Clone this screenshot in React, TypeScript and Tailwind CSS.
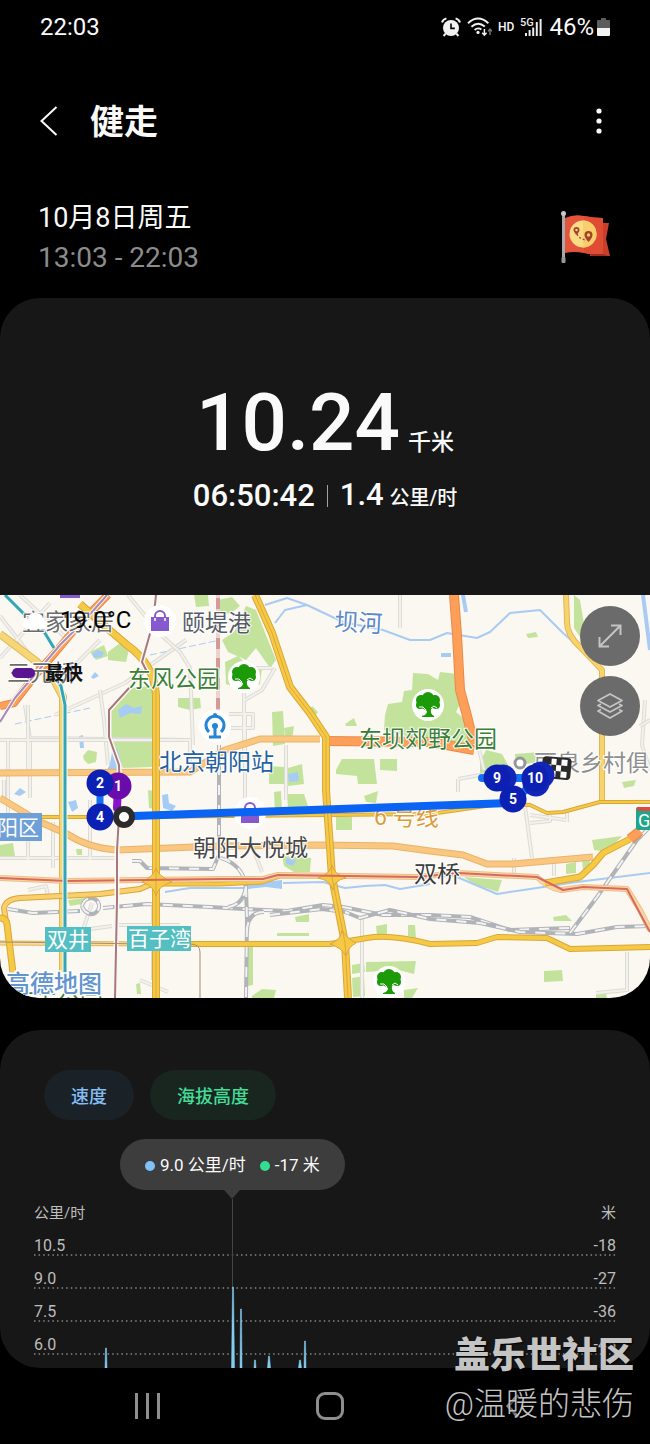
import { ReactNode } from "react";

const CARD = "bg-[#171717]";

const GREENS = [
  "110,710 130,688 152,686 152,767 123,768 110,738",
  "108,652 124,640 130,645 126,662 108,660",
  "90,652 104,645 108,656 96,660",
  "83,756 88,750 97,752 96,762 88,764 84,760",
  "178,698 200,698 201,708 190,710 178,707",
  "194,595 208,595 209,606 196,607",
  "222,640 234,632 246,606 256,610 268,640 276,660 270,668 256,648 246,660 228,652",
  "218,600 232,597 240,606 230,614 220,612",
  "225,662 238,656 246,664 262,668 260,684 246,690 226,684",
  "272,712 283,711 285,744 273,746",
  "284,728 294,726 292,740 286,742",
  "312,706 318,712 314,718 309,712",
  "345,724 354,718 357,726 346,726",
  "385,715 388,704 402,702 404,691 412,690 413,673 428,674 438,680 440,672 458,674 462,700 456,712 468,722 470,742 452,748 384,730",
  "269,766 285,767 285,784 269,784",
  "288,768 302,764 304,784 288,786",
  "336,770 342,759 374,759 377,784 358,784 357,776 336,774",
  "380,759 397,759 397,771 380,770",
  "274,792 281,791 282,812 275,812",
  "287,794 304,794 308,806 288,808",
  "336,816 352,817 352,830 336,830",
  "364,796 378,791 376,803 366,802",
  "480,762 486,750 502,754 512,772 490,776 480,774",
  "515,754 540,752 536,762 516,766",
  "574,595 580,600 584,624 582,640 574,628",
  "526,634 536,632 538,637 528,638",
  "622,782 636,780 634,786 624,788",
  "282,856 311,858 310,872 294,872 284,866",
  "0,845 13,843 15,856 6,859 0,858",
  "76,849 82,849 82,855 77,855",
  "592,840 622,836 608,852 594,850",
  "464,877 502,880 498,892 486,888 478,887",
  "566,864 576,862 576,873 566,874",
  "582,860 590,858 590,870 583,870",
  "553,917 566,915 572,921 554,921",
  "544,971 562,970 563,981 544,982",
  "277,933 309,933 309,936 277,936",
  "295,917 309,914 309,922 296,922",
  "352,965 364,963 365,972 352,974",
  "366,962 416,961 414,974 398,970 366,972",
  "352,978 364,976 365,996 353,997",
  "404,990 418,988 412,998 404,998",
  "376,926 387,924 387,936 377,936",
  "408,925 415,925 416,938 408,936",
  "248,948 253,944 253,985 248,986",
  "252,996 262,989 276,990 274,998 252,998",
  "136,984 140,983 141,994 137,994",
  "148,790 160,792 160,810 149,808",
  "68,900 84,898 82,904 70,906",
  "596,995 606,993 607,998 596,998",
];

const WATERS = [
  "118,710 126,704 134,708 142,706 141,714 130,713 120,718",
  "112,752 117,748 122,766 118,776 104,776 110,764",
  "92,654 97,650 104,652 102,657 94,658",
  "91,677 95,672 99,676 93,679",
  "79,736 83,735 84,748 80,748",
  "14,794 20,788 26,792 20,796",
  "244,886 262,882 282,880 282,889 266,887 248,889",
  "162,795 168,794 169,803 176,806 172,811 163,808",
  "288,774 298,772 299,781 289,782",
  "286,858 296,860 293,866 286,864",
  "441,653 451,653 451,657 441,657",
  "68,802 76,800 78,808 72,812",
];

const STREETS = [
  "M0 616L40 668M0 658L50 603M20 595L68 640M60 680L100 640M25 705L30 738L190 740",
  "M28 705L28 770M8 740V815M30 742V798M0 740H96M55 715L125 683L186 640",
  "M128 595L160 634L180 652L190 668L193 745M100 690L104 720L108 765M4 780V800",
  "M0 858H118M28 820V860M53 822V868M90 800V860M28 890L46 886L48 896",
  "M244 760V668L272 668M245 700L262 690L275 668M229 714H253V728H228M245 714V800",
  "M286 745L286 800M362 918V998M508 770L458 779M458 779V792M478 745L484 770",
  "M525 806L532 858M530 823L550 821V815M567 822V812M530 815L566 820",
  "M554 862V876M514 858V874M627 952V990L596 993M645 700L642 745L650 770",
  "M92 903L83 930L112 926M153 905V980M180 925H114M140 980L168 992M250 840L262 872",
  "M38 740H190V770M400 595V628M640 726L650 720",
];

const AMBER = "#f6c945";
const AMBER_EDGE = "#d9a63a";
const PEACH = "#fac781";
const PEACH_EDGE = "#e8b36a";
const ORANGE = "#fd9f59";
const ORANGE_EDGE = "#e88a49";

const ROADS = [
  { d: "M0 817H130L430 814L500 804L530 805L547 813L563 812L600 802H650", w: 3, fill: AMBER, edge: AMBER_EDGE },
  { d: "M0 773L190 772L225 750L260 739H320", w: 6, fill: PEACH, edge: PEACH_EDGE },
  { d: "M0 798L40 822L67 834Q88 848 117 850L220 846L317 845L393 846L430 851L463 855L487 864H513L593 857", w: 6, fill: PEACH, edge: PEACH_EDGE },
  { d: "M0 634L37 662L55 682L63 697V972", w: 7, fill: "#f6d778", edge: "#e3b653" },
  { d: "M602 800V670L580 647Q566 634 567 620L566 595", w: 5, fill: "#f7d36c", edge: "#e3b653" },
  { d: "M325 741L430 742L474 750", w: 9, fill: ORANGE, edge: ORANGE_EDGE },
  { d: "M454 595L457 635L460 690L466 712L474 744", w: 9, fill: ORANGE, edge: ORANGE_EDGE },
  { d: "M0 706L14 703L37 673L55 653L80 623L108 595", w: 7, fill: ORANGE, edge: ORANGE_EDGE },
  { d: "M0 943L150 944", w: 4, fill: "#f8dba0", edge: "#e3b653" },
  { d: "M150 944H330L367 938Q390 934 430 944L477 943L497 937L547 938L570 949L650 947", w: 5, fill: AMBER, edge: AMBER_EDGE },
  { d: "M6 922L4 908Q6 899 20 898L100 894L140 889L156 882", w: 5, fill: "#fad06f", edge: AMBER_EDGE },
  { d: "M0 918Q6 918 7 924L13 973", w: 6, fill: AMBER, edge: AMBER_EDGE },
  { d: "M150 884H220L262 882L280 876H332", w: 4, fill: AMBER, edge: AMBER_EDGE },
  { d: "M0 878L67 881L220 879L263 879L278 875L417 877L458 873L537 877Q548 888 561 890L583 887L627 889L640 910L650 930", w: 5, fill: "#fad7a2", edge: "#eac08a" },
  { d: "M545 883L580 877L593 865L603 853L630 839", w: 6, fill: AMBER, edge: AMBER_EDGE },
  { d: "M630 839L640 831", w: 9, fill: ORANGE, edge: ORANGE_EDGE },
  { d: "M80 604L100 622L127 645Q154 664 156 695V998", w: 7, fill: AMBER, edge: AMBER_EDGE },
  { d: "M255 595L272 633L290 687L310 713L326 737L326 790L332 877L345 943L348 998", w: 7, fill: AMBER, edge: AMBER_EDGE },
];

const RAILS = [
  "M8 909L33 913L80 911M103 908L147 904L210 907L243 909L287 911L323 905L343 907L383 915L430 915L470 917L510 930L570 928",
  "M340 910L360 918L390 910L430 919L480 923L520 932L577 934L617 927L650 926",
  "M270 915L322 909L345 912",
  "M570 933L597 897L637 840L650 827",
  "M246 887L247 920L246 998M228 907Q246 904 246 882M264 912Q247 912 247 932",
  "M219 745V850M132 861H140L147 868L213 869L218 857L226 860Q244 868 246 887",
  "M82 906Q84 898 92 898Q100 900 99 908Q96 915 90 914Q84 912 82 906",
];

const LABELS = [
  { x: 22, y: 630, text: "宜家家居", fill: "#6c6c6c" },
  { x: 7, y: 681, text: "三元桥", fill: "#6c6c6c" },
  { x: 182, y: 631, text: "颐堤港", fill: "#555b66" },
  { x: 128, y: 687, text: "东风公园", fill: "#3b7f35" },
  { x: 359, y: 747, text: "东坝郊野公园", fill: "#3b7f35" },
  { x: 159, y: 770, text: "北京朝阳站", fill: "#23619f" },
  { x: 193, y: 856, text: "朝阳大悦城", fill: "#484848" },
  { x: 414, y: 882, text: "双桥", fill: "#3c3c3c" },
  { x: 534, y: 771, text: "丽泉乡村俱乐部", fill: "#8f8f8f" },
  { x: 11, y: 1009, text: "庆丰公园", fill: "#3b7f35" },
];

const PINS = [
  { x: 503, y: 778, label: "", fill: "#1226b8" },
  { x: 541, y: 775, label: "", fill: "#1226b8" },
  { x: 536, y: 783, label: "", fill: "#1226b8" },
  { x: 118, y: 786, label: "1", fill: "#6a0bab" },
  { x: 100, y: 783, label: "2", fill: "#0d20b4" },
  { x: 100, y: 817, label: "4", fill: "#0d20b4" },
  { x: 497, y: 778, label: "9", fill: "#0d20b4" },
  { x: 535, y: 778, label: "10", fill: "#0d20b4" },
  { x: 513, y: 799, label: "5", fill: "#0d20b4" },
];

const ROWS = [
  { speed: "10.5", altitude: "-18" },
  { speed: "9.0", altitude: "-27" },
  { speed: "7.5", altitude: "-36" },
  { speed: "6.0", altitude: "-45" },
];

const SPIKES = [
  { x: 72, top: 158, w: 2 },
  { x: 199, top: 97, w: 3 },
  { x: 207, top: 119, w: 2 },
  { x: 221, top: 170, w: 2 },
  { x: 235, top: 166, w: 3 },
  { x: 266, top: 170, w: 3 },
  { x: 271, top: 151, w: 2 },
];

function StatusIcons() {
  return (
    <div className="flex items-center gap-1.5">
      <svg width="20" height="20" viewBox="0 0 20 20" fill="none" stroke="#f2f2f2">
        <circle cx="10" cy="11" r="8" fill="#f2f2f2" stroke="none" />
        <path d="M1 5.5Q2 2.4 5.4 1.4M19 5.5Q18 2.4 14.6 1.4M4.6 16.6L2.6 19M15.4 16.6L17.4 19" strokeWidth="2" />
        <path d="M10 6.4V11.4H13.8" stroke="#000" strokeWidth="1.6" />
      </svg>
      <svg width="25" height="20" viewBox="0 0 25 20" fill="none" stroke="#f2f2f2" strokeWidth="1.9">
        <path d="M1 6.2Q11 -3 21.4 6.2M4.4 9.8Q11 4 17.8 9.6M7.6 13Q11 10 14.4 12.6" />
        <circle cx="11" cy="15.4" r="1.6" fill="#f2f2f2" stroke="none" />
        <path d="M17.4 12V18M15.2 15.8L17.4 18.2L19.6 15.8" strokeWidth="1.5" />
        <path d="M23 18V12M21 14.4L23 12L25 14.4" stroke="#777" strokeWidth="1.4" />
      </svg>
      <span className="text-[12px] leading-5 font-medium">HD</span>
      <svg width="23" height="20" viewBox="0 0 23 20" fill="#ececec">
        <text x="0" y="9" fontSize="11" fontWeight="500">5G</text>
        <path d="M5 16h2v3H5zM8.600 13h2v6h-2zM12.200 10.500h2V19h-2zM15.800 5h2v14h-2zM19.600 2h2v17h-2z" />
      </svg>
    </div>
  );
}

function FlagBadge() {
  return (
    <svg width="52" height="56" viewBox="0 0 52 56">
      <path d="M38 13H49L46 29L50 46H30z" fill="#c9402a" />
      <path d="M5 8Q14 4 24 6Q34 8 43 8V44Q34 45 24 43Q14 41 5 43z" fill="#e4543a" />
      <path d="M24 6Q34 8 43 8V44Q34 45 24 43z" fill="#dd4c33" />
      <path d="M43 44L30 44L32 46H48z" fill="#9f2c1f" />
      <circle cx="23" cy="24" r="13.500" fill="#fbdc86" />
      <path d="M23 10.500A13.500 13.500 0 0 1 23 37.500z" fill="#f8cf6c" />
      <path d="M17 24Q19 29 26 30" fill="none" stroke="#a84a2c" strokeWidth="1.300" strokeDasharray="2 2" />
      <path d="M16.500 25Q13.500 21.500 13.500 20A3 3 0 0 1 19.500 20Q19.500 21.500 16.500 25z" fill="#a5402a" />
      <path d="M28.500 32Q24.500 27.500 24.500 25A4 4 0 0 1 32.500 25Q32.500 27.500 28.500 32z" fill="#a5402a" />
      <circle cx="16.500" cy="20" r="1.200" fill="#fbdc86" />
      <circle cx="28.500" cy="25" r="1.700" fill="#f8cf6c" />
      <rect x="2" y="3" width="3" height="49" fill="#a9a9ad" />
      <circle cx="3.500" cy="3.500" r="2.500" fill="#c9c9cd" />
      <rect x="1.500" y="47" width="4" height="6" rx="1" fill="#97979b" />
    </svg>
  );
}

function MapIcon({ x, y, children }: { x: number; y: number; children: ReactNode }) {
  return (
    <g transform={`translate(${x} ${y})`}>
      <circle r="16" fill="#fff" />
      {children}
    </g>
  );
}

function Tree({ x, y }: { x: number; y: number }) {
  return (
    <MapIcon x={x} y={y}>
      <g fill="#1c9a08">
        <circle cx="-7" cy="-5" r="5" />
        <circle cx="0" cy="-7" r="6" />
        <circle cx="7" cy="-5" r="5" />
        <circle cx="-8" cy="0" r="4" />
        <circle cx="8" cy="0" r="4" />
        <path d="M-8 -5H8V1L3 4Q2 9 6 11V12H-6V11Q-1 10 -1 6L-6 3z" />
      </g>
      <path d="M-9 2H-5L-2 5M9 3L6 1L3 3" fill="none" stroke="#fff" strokeWidth="1" />
    </MapIcon>
  );
}

function Bag({ x, y }: { x: number; y: number }) {
  return (
    <MapIcon x={x} y={y}>
      <path d="M-9 -4H9V10H-9z" fill="#8759cf" />
      <path d="M-5 0V-5A5 5 0 0 1 5 -5V0" fill="none" stroke="#8759cf" strokeWidth="2" />
      <path d="M-5 -3V0M5 -3V0" stroke="#fff" strokeWidth="1.500" />
    </MapIcon>
  );
}

function RouteMap() {
  return (
    <svg
      className="block h-[403px] w-full"
      viewBox="0 595 650 403"
      preserveAspectRatio="xMidYMid slice"
      role="img"
      aria-label="路线"
    >
      <rect y="595" width="650" height="403" fill="#fbf8f1" />
      {GREENS.map((points) => (
        <polygon key={points} points={points} fill="#c3e39d" />
      ))}
      {WATERS.map((points) => (
        <polygon key={points} points={points} fill="#a6cbf5" />
      ))}
      <g fill="none" strokeLinejoin="round">
        <g stroke="#a9cbf3" strokeWidth="2">
          <path d="M265 605L287 598L307 605L343 622L383 630L410 640L430 640L447 633L477 638L490 632L510 613L540 610L563 633L597 663" />
          <path d="M283 883L323 882L345 888L365 886L385 885L400 889L430 884M457 877L497 894L530 889L577 882L650 873" />
          <path d="M165 892L190 888L250 888M275 623L285 610L307 605" />
          <path d="M463 595L466 612M643 595L650 650" strokeWidth="4" />
          <path d="M15 724L90 708M150 655L220 640" strokeWidth="1" strokeDasharray="7 3" />
        </g>
        {STREETS.map((d) => (
          <g key={d}>
            <path d={d} stroke="#dddbd6" strokeWidth="4" />
            <path d={d} stroke="#f3f1ec" strokeWidth="2" />
          </g>
        ))}
        {RAILS.map((d) => (
          <g key={d}>
            <path d={d} stroke="#b0b3b8" strokeWidth="4" />
            <path d={d} stroke="#f3f3f3" strokeWidth="2" strokeDasharray="10 10" />
          </g>
        ))}
        <path d="M218 595V712" stroke="#ecd3d0" strokeWidth="4" />
        <path d="M218 598V712" stroke="#d39a98" strokeWidth="4" strokeDasharray="11 9" />
        {ROADS.map((road) => (
          <g key={road.d}>
            <path d={road.d} stroke={road.edge} strokeWidth={road.w + 1} />
            <path d={road.d} stroke={road.fill} strokeWidth={road.w - 1} />
          </g>
        ))}
        <path d="M332 865Q334 874 346 878Q334 880 333 890Q330 880 318 878Q330 874 332 865z" fill={AMBER} stroke={AMBER_EDGE} />
        <path d="M156 868Q158 876 172 882Q158 886 156 896Q154 886 142 882Q154 876 156 868z" fill={AMBER} stroke={AMBER_EDGE} />
        <path d="M342 930Q346 938 356 943Q348 947 346 956Q342 948 330 944Q341 940 342 930z" fill={AMBER} stroke={AMBER_EDGE} />
        <path d="M156 685V998M255 595L272 633L290 687L310 713L326 737L326 790L332 877L345 943L348 998" stroke="#dba93c" />
        <path d="M0 878L67 881L220 879L263 879L278 875L417 877L458 873L537 877L563 890L583 887L627 889L650 932" stroke="#d9685f" strokeWidth="2" />
        <path d="M156 595L153 623L142 662L146 670L130 687L109 710V737L119 765L120 800L117 850V900L115 998" stroke="#fbf8f1" strokeWidth="5" />
        <path d="M156 595L153 623L142 662L146 670L130 687L109 710V737L119 765L120 800L117 850V900L115 998" stroke="#a77780" strokeWidth="2" />
        <path d="M0 942L150 944H190Q200 944 200 952V998" stroke="#a58f72" />
        <path d="M0 722L15 698L60 645L85 620L107 595" stroke="#fbf8f1" strokeWidth="4" />
        <path d="M0 722L15 698L60 645L85 620L107 595" stroke="#a98bb5" strokeWidth="2" />
        <path d="M5 595L23 613L43 630L54 648M50 672L61 686L65 705V975" stroke="#eefafa" strokeWidth="5" />
        <path d="M5 595L23 613L43 630L54 648M50 672L61 686L65 705V975" stroke="#35a5b3" strokeWidth="3" />
      </g>

      <path d="M60 595H80V598H60z" fill="#8759cf" />
      <Bag x={160} y={621} />
      <Bag x={250} y={813} />
      <Tree x={244} y={677} />
      <Tree x={428} y={705} />
      <Tree x={389} y={982} />
      <MapIcon x={215} y={726}>
        <g fill="none" stroke="#2584d4" strokeWidth="3">
          <path d="M-6 6A9 9 0 1 1 6 6" />
          <path d="M-6 11H6M0 0V10" />
        </g>
        <circle r="3" fill="#2584d4" />
        <circle cy="-11" r="2" fill="#2584d4" />
      </MapIcon>
      <circle cx="520" cy="763" r="5" fill="#fff" stroke="#92979c" strokeWidth="3" />

      <g fontSize="23" stroke="#fff" strokeWidth="2" strokeLinejoin="round" paintOrder="stroke">
        {LABELS.map((label) => (
          <text key={label.text} x={label.x} y={label.y} fill={label.fill}>
            {label.text}
          </text>
        ))}
        <text x="334" y="630" fill="#5c8ac6" fontSize="24" transform="rotate(3 334 630)">坝河</text>
        <text x="374" y="825" fill="#dd9a3b">6 号线</text>
      </g>
      <rect y="813" width="42" height="28" fill="#6d9fd8" />
      <rect x="45" y="927" width="46" height="25" fill="#54bfc2" />
      <rect x="127" y="926" width="64" height="25" fill="#54bfc2" />
      <g fill="#fff" fontSize="21">
        <text x="-3" y="835">阳区</text>
        <text x="47" y="947">双井</text>
        <text x="128" y="946">百子湾</text>
      </g>
      <text x="6" y="992" fontSize="24" fontWeight="500" fill="#6295cd" stroke="#fff" strokeWidth="3" paintOrder="stroke">
        高德地图
      </text>
      <rect x="636" y="807" width="20" height="23" rx="2" fill="#1ea58a" />
      <rect x="637" y="807" width="20" height="4" fill="#dd4a40" />
      <text x="638" y="827" fontSize="18" fill="#fff">G</text>

      <g fill="none" strokeLinecap="round">
        <path d="M482 778H540" stroke="#1571f2" strokeWidth="8" />
        <path d="M513 799L536 783" stroke="#1571f2" strokeWidth="8" />
        <path d="M100 783V817" stroke="#1571f2" strokeWidth="7" />
        <path d="M118 786L117 808" stroke="#8a12c9" strokeWidth="8" />
        <path d="M134 816L513 803" stroke="#0a63f2" strokeWidth="8" />
      </g>
      <g transform="rotate(5 556 768)">
        <rect x="542" y="757" width="29" height="22" rx="4" fill="#2a2a2a" />
        <path d="M551 759h5v6h-5zM561 759h6v6h-6zM546 765h5v6h-5zM556 765h5v6h-5zM551 771h5v6h-5zM561 771h6v6h-6z" fill="#fff" />
      </g>
      {PINS.map((pin) => (
        <g key={`${pin.x}-${pin.y}`}>
          <circle cx={pin.x} cy={pin.y} r="13.500" fill={pin.fill} />
          <text x={pin.x} y={pin.y + 5} fontSize="14" fontWeight="700" fill="#fff" textAnchor="middle">
            {pin.label}
          </text>
        </g>
      ))}
      <circle cx="124" cy="817" r="8" fill="#fff" stroke="#2c2c2c" strokeWidth="6" />

      <path d="M29 629Q23 629 23 624Q23 620 28 619Q30 611 37 613Q43 614 43 619Q48 620 47 625Q46 629 42 629z" fill="#fff" />
      <text x="60" y="628" fontSize="24" fill="#000">19.0°C</text>
      <rect x="12" y="668" width="23" height="10" rx="5" fill="#5a1690" />
      <text x="45" y="680" fontSize="19" fontWeight="700" fill="#111">最快</text>
    </svg>
  );
}

function SummaryCard() {
  return (
    <section className={`${CARD} overflow-hidden rounded-[40px]`}>
      <div className="flex flex-col items-center gap-3 pt-[84px] pb-[79px] font-medium">
        <div className="flex items-baseline gap-2 text-[80px] leading-[82px]">
          10.24
          <span className="text-[23px] leading-6">千米</span>
        </div>
        <div className="flex h-10 items-center gap-3 text-[31px] leading-10">
          06:50:42
          <span className="h-[22px] w-px bg-neutral-400" />
          <span>
            1.4 <span className="-ml-0.5 text-[20px]">公里/时</span>
          </span>
        </div>
      </div>
      <div className="relative">
        <RouteMap />
        <div className="absolute top-[11px] right-[10px] flex flex-col gap-[10px]">
          <button aria-label="展开" className="flex size-[60px] items-center justify-center rounded-full bg-[#6b6b6b]">
            <svg width="26" height="26" viewBox="0 0 26 26" fill="none" stroke="#c4c4c4" strokeWidth="2">
              <path d="M2.500 23.500L23.500 2.500M14 2.500H23.500V12M2.500 14V23.500H12" />
            </svg>
          </button>
          <button aria-label="图层" className="flex size-[60px] items-center justify-center rounded-full bg-[#6b6b6b]">
            <svg width="28" height="28" viewBox="0 0 28 28" fill="none" stroke="#c4c4c4" strokeWidth="1.800" strokeLinejoin="round">
              <path d="M14 2L26 8.500L14 15L2 8.500z" />
              <path d="M5 12L2 13.500L14 20L26 13.500L23 12M5 17.500L2 19L14 26L26 19L23 17.500" />
            </svg>
          </button>
        </div>
      </div>
    </section>
  );
}

function ChartCard() {
  return (
    <section className={`${CARD} mt-8 overflow-hidden rounded-[40px] px-[34px] pt-10`}>
      <div className="ml-2.5 flex gap-4 text-[18px] font-medium">
        <button className="h-[50px] rounded-full bg-[#1a2127] px-[27px] pt-0.5 text-[#84bdf3]">速度</button>
        <button className="h-[50px] rounded-full bg-[#19261f] px-[27px] pt-0.5 text-[#43dc98]">海拔高度</button>
      </div>
      <div className="relative mt-[19px] ml-[86px] flex h-[51px] w-fit items-center gap-3.5 rounded-full bg-[#3d3d3d] px-[25px] pt-0.5 text-[17px]">
        <span className="flex items-center gap-[5px]">
          <span className="size-2.5 rounded-full bg-[#7fc1f8]" />
          9.0 公里/时
        </span>
        <span className="flex items-center gap-[5px]">
          <span className="size-2.5 rounded-full bg-[#35dd92]" />
          -17 米
        </span>
        <svg className="absolute top-full left-1/2 -translate-x-1/2" width="16" height="9" viewBox="0 0 16 9">
          <path d="M0 0H16L8 9z" fill="#3d3d3d" />
        </svg>
      </div>
      <div className="relative pt-[13px] pb-[13px] text-[16px] leading-5 text-[#bdbdbd]">
        <div className="flex justify-between text-[15px]">
          <span>公里/时</span>
          <span>米</span>
        </div>
        {ROWS.map((row) => (
          <div key={row.speed} className="relative flex h-[33px] items-end justify-between">
            <span>{row.speed}</span>
            <span>{row.altitude}</span>
            <svg className="absolute bottom-0 left-0 h-0.5 w-full">
              <line x1="0" x2="100%" y1="1" y2="1" stroke="#858585" strokeWidth="1.500" strokeDasharray="1.500 3.100" />
            </svg>
          </div>
        ))}
        <svg className="absolute inset-0 h-full w-full" viewBox="0 0 582 178" preserveAspectRatio="none">
          <path d="M198.500 9V97" stroke="#454545" />
          {SPIKES.map((s) => (
            <path key={s.x} d={`M${s.x - s.w / 2} 178L${s.x - 0.5} ${s.top}H${s.x + 0.5}L${s.x + s.w / 2} 178z`} fill="#84cdf0" stroke="#84cdf0" strokeWidth="0.500" />
          ))}
        </svg>
      </div>
    </section>
  );
}

export default function App() {
  return (
    <main className="relative min-h-screen overflow-hidden bg-black font-['Roboto','Noto_Sans_CJK_SC',sans-serif] text-[#fafafa]">
      <div className="flex h-[54px] items-center justify-between pr-10 pl-10 text-[24px]">
        <span>22:03</span>
        <div className="flex items-center gap-1.5">
          <StatusIcons />
          <span className="flex items-center gap-[3px]">
            46%
            <svg width="13" height="20" viewBox="0 0 13 20">
              <path d="M4 1h5v2h3q1 0 1 1v7H0V4q0-1 1-1h3z" fill="#5c5c5c" />
              <path d="M0 11H13V18q0 1-1 1H1q-1 0-1-1z" fill="#f2f2f2" />
            </svg>
          </span>
        </div>
      </div>

      <header className="flex h-[134px] items-center justify-between px-10">
        <div className="flex items-center gap-8">
          <button aria-label="返回">
            <svg width="18" height="30" viewBox="0 0 18 30" fill="none" stroke="#fafafa" strokeWidth="2">
              <path d="M16.500 1L1.500 15L16.500 29" />
            </svg>
          </button>
          <h1 className="pt-0.5 text-[34px] leading-10 font-bold">健走</h1>
        </div>
        <button aria-label="更多选项">
          <svg width="22" height="30" viewBox="0 0 22 30" fill="#fafafa">
            <circle cx="11" cy="5" r="2.600" />
            <circle cx="11" cy="15" r="2.600" />
            <circle cx="11" cy="25" r="2.600" />
          </svg>
        </button>
      </header>

      <div className="flex items-center justify-between px-[38px] pt-2.5 pb-5">
        <div className="leading-10">
          <p className="text-[27px] leading-10">10月8日周五</p>
          <p className="text-[28px] leading-10 text-[#8c8c8c]">13:03 - 22:03</p>
        </div>
        <FlagBadge />
      </div>

      <SummaryCard />
      <ChartCard />

      <nav className="flex h-[76px] items-center justify-between pr-[113px] pl-[123px]">
        <button aria-label="最近" className="flex w-12 justify-center gap-2">
          <span className="h-[26px] w-[3px] bg-[#8e8e8e]" />
          <span className="h-[26px] w-[3px] bg-[#8e8e8e]" />
          <span className="h-[26px] w-[3px] bg-[#8e8e8e]" />
        </button>
        <button aria-label="主页" className="flex w-12 justify-center">
          <span className="size-7 rounded-[9px] border-3 border-[#8e8e8e]" />
        </button>
        <button aria-label="后退" className="flex w-12 justify-center">
          <svg width="14" height="26" viewBox="0 0 14 26" fill="none" stroke="#8e8e8e" strokeWidth="3">
            <path d="M12 2L2 13L12 24" />
          </svg>
        </button>
      </nav>

      <div className="pointer-events-none absolute right-4 bottom-4 flex flex-col items-end text-[#c4c4c4]">
        <p className="text-[36px] leading-12 font-black [text-shadow:1px_1px_2px_#000]">盖乐世社区</p>
        <p className="text-[32px] leading-12 font-light [text-shadow:1px_1px_2px_#000]">@温暖的悲伤</p>
      </div>
    </main>
  );
}
